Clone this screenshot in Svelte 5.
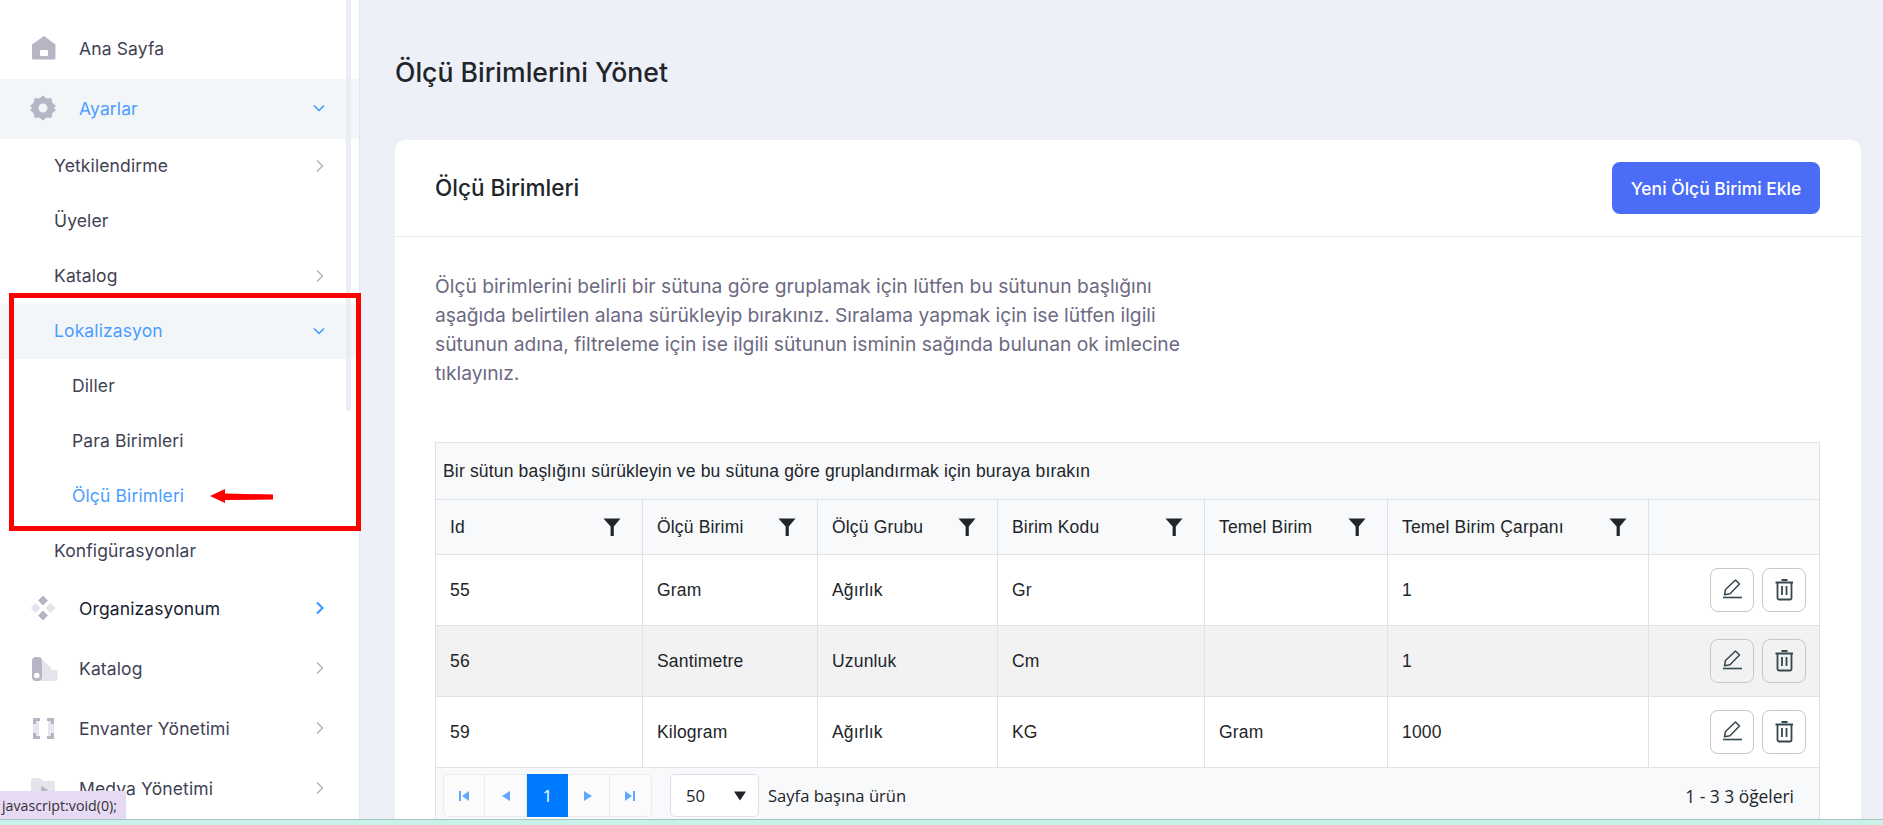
<script>
  const cols = [
    { t: 'Id', w: 207 },
    { t: 'Ölçü Birimi', w: 175 },
    { t: 'Ölçü Grubu', w: 180 },
    { t: 'Birim Kodu', w: 207 },
    { t: 'Temel Birim', w: 183 },
    { t: 'Temel Birim Çarpanı', w: 261 }
  ];
  const rows = [
    ['55', 'Gram', 'Ağırlık', 'Gr', '', '1'],
    ['56', 'Santimetre', 'Uzunluk', 'Cm', '', '1'],
    ['59', 'Kilogram', 'Ağırlık', 'KG', 'Gram', '1000']
  ];
</script>

{#snippet right(cls)}
  <svg class="chev {cls}" viewBox="0 0 10 14" width="10" height="14"><path d="M2 1.500l5.500 5.500-5.500 5.500" fill="none" stroke="currentColor" stroke-width="1.500"/></svg>
{/snippet}
{#snippet down()}
  <svg class="chev blue" viewBox="0 0 12 10" width="12" height="10"><path d="M1 2.500l5 5 5-5" fill="none" stroke="currentColor" stroke-width="1.500"/></svg>
{/snippet}

<div class="page">
  <aside class="side">
    <div class="track"></div>
    <div class="mrow">
      <svg class="ic" viewBox="0 0 26 26" width="26" height="26"><path fill="#b5b5c3" d="M14 1l11.500 8.500V23a1.500 1.500 0 0 1-1.500 1.500H3.500A1.500 1.500 0 0 1 2 23V9.500z"/><rect x="10" y="15" width="8" height="6" rx="1" fill="#fff"/></svg>
      <span class="lbl">Ana Sayfa</span>
    </div>
    <div class="mrow on">
      <svg class="ic" viewBox="0 0 26 26" width="26" height="26"><path fill="#b5b5c3" fill-rule="evenodd" d="M13 .5l3.700 2.900 4.700-.3.900 4.600 3.600 3-1.900 2.300 1.900 2.300-3.600 3-.9 4.600-4.700-.3L13 25.500l-3.700-2.900-4.700.3-.9-4.600-3.600-3 1.900-2.300L.1 10.700l3.600-3 .9-4.600 4.700.3zM13 8.500a4.500 4.500 0 1 0 0 9 4.500 4.500 0 0 0 0-9z"/></svg>
      <span class="lbl">Ayarlar</span>
      {@render down()}
    </div>
    <div class="srow"><span>Yetkilendirme</span>{@render right('grey')}</div>
    <div class="srow"><span>Üyeler</span></div>
    <div class="srow"><span>Katalog</span>{@render right('grey')}</div>
    <div class="srow on"><span>Lokalizasyon</span>{@render down()}</div>
    <div class="srow deep"><span>Diller</span></div>
    <div class="srow deep"><span>Para Birimleri</span></div>
    <div class="srow deep cur"><span>Ölçü Birimleri</span></div>
    <div class="srow"><span>Konfigürasyonlar</span></div>
    <div class="mrow">
      <svg class="ic" viewBox="0 0 26 26" width="26" height="26"><path d="M13 1l4.500 4.500L13 10 8.500 5.500z" fill="#b5b5c3" stroke="#b5b5c3" stroke-linejoin="round"/><path d="M5.500 8.500L10 13l-4.500 4.500L1 13zM20.500 8.500L25 13l-4.500 4.500L16 13z" fill="#e4e4ea" stroke="#e4e4ea" stroke-linejoin="round"/><path d="M13 16l4.500 4.500L13 25l-4.500-4.500z" fill="#b5b5c3" stroke="#b5b5c3" stroke-linejoin="round"/></svg>
      <span class="lbl dark">Organizasyonum</span>
      {@render right('bluer')}
    </div>
    <div class="mrow">
      <svg class="ic over" viewBox="0 0 26 26" width="26" height="26"><path d="M12 7l1-2 9 9-3 3h-7zM11 15h15a1.500 1.500 0 0 1 1.500 1.500V24a2 2 0 0 1-2 2H8z" fill="#e4e4ea"/><rect x="2" y="2" width="10" height="24" rx="4" fill="#b5b5c3"/><circle cx="6.800" cy="20.500" r="2.800" fill="#fff"/></svg>
      <span class="lbl">Katalog</span>
      {@render right('grey')}
    </div>
    <div class="mrow">
      <svg class="ic" viewBox="0 0 26 26" width="26" height="26"><path d="M3 6h6v15H3zM18 6h6v15h-6z" fill="#e6e6ec"/><path d="M3 3h7v3H6v3H3zM24 3h-7v3h4v3h3zM3 24h7v-3H6v-3H3zM24 24h-7v-3h4v-3h3z" fill="#b5b5c3"/></svg>
      <span class="lbl">Envanter Yönetimi</span>
      {@render right('grey')}
    </div>
    <div class="mrow">
      <svg class="ic" viewBox="0 0 26 26" width="26" height="26"><path d="M3 3h7l3 3h10a2 2 0 0 1 2 2v14a2 2 0 0 1-2 2H3a2 2 0 0 1-2-2V5a2 2 0 0 1 2-2z" fill="#e4e4ea"/><path d="M11 11l7 4-7 4z" fill="#b5b5c3"/></svg>
      <span class="lbl">Medya Yönetimi</span>
      {@render right('grey')}
    </div>
  </aside>

  <main class="main">
    <h1>Ölçü Birimlerini Yönet</h1>
    <section class="card">
      <header class="chead">
        <h2>Ölçü Birimleri</h2>
        <button class="add">Yeni Ölçü Birimi Ekle</button>
      </header>
      <div class="cbody">
        <p class="info">Ölçü birimlerini belirli bir sütuna göre gruplamak için lütfen bu sütunun başlığını aşağıda belirtilen alana sürükleyip bırakınız. Sıralama yapmak için ise lütfen ilgili sütunun adına, filtreleme için ise ilgili sütunun isminin sağında bulunan ok imlecine tıklayınız.</p>
        <div class="grid">
          <div class="group">Bir sütun başlığını sürükleyin ve bu sütuna göre gruplandırmak için buraya bırakın</div>
          <div class="thead">
            {#each cols as c}
              <div class="th" style="width:{c.w}px">
                <span>{c.t}</span>
                <svg viewBox="0 0 18 20" width="18" height="20"><path d="M.5 1.500h17L10.800 9.500v9.500H7.600V9.500z" fill="#212529"/></svg>
              </div>
            {/each}
            <div class="th last"></div>
          </div>
          {#each rows as r, i}
            <div class="tr" class:alt={i === 1}>
              {#each r as v, j}
                <div class="td" style="width:{cols[j].w}px">{v}</div>
              {/each}
              <div class="td act">
                <button class="ib" aria-label="Düzenle">
                  <svg viewBox="1 1 42 42" width="42" height="42"><path d="M14.500 26.800l1-5.300L25.500 12l4 4-9.500 9.800z" fill="none" stroke="#37474f" stroke-width="1.500" stroke-linejoin="round"/><path d="M13 29.500h19" stroke="#37474f" stroke-width="1.600"/></svg>
                </button>
                <button class="ib" aria-label="Sil">
                  <svg viewBox="1 1 42 42" width="42" height="42"><path d="M13.500 14.500h17.500M15.500 14.500v15.500a1.500 1.500 0 0 0 1.500 1.500h11a1.500 1.500 0 0 0 1.500-1.500V14.500M20 18v9M24.500 18v9M19.500 12h6" fill="none" stroke="#37474f" stroke-width="1.800"/></svg>
                </button>
              </div>
            </div>
          {/each}
          <div class="foot">
            <div class="pager">
              <span class="pg"><svg viewBox="0 0 12 12" width="12" height="12"><path d="M1 1h2v10H1zM11 1v10L4 6z" fill="#64a8fb"/></svg></span>
              <span class="pg"><svg viewBox="0 0 12 12" width="12" height="12"><path d="M10 1v10L2 6z" fill="#64a8fb"/></svg></span>
              <span class="pg act">1</span>
              <span class="pg"><svg viewBox="0 0 12 12" width="12" height="12"><path d="M2 1v10l8-5z" fill="#64a8fb"/></svg></span>
              <span class="pg"><svg viewBox="0 0 12 12" width="12" height="12"><path d="M1 1v10l7-5zM9 1h2v10H9z" fill="#64a8fb"/></svg></span>
            </div>
            <div class="sel"><span>50</span><svg viewBox="0 0 12 10" width="12" height="10"><path d="M0 .500h12L6 9.500z" fill="#212529"/></svg></div>
            <span class="per">Sayfa başına ürün</span>
            <span class="count">1 - 3 3 öğeleri</span>
          </div>
        </div>
      </div>
    </section>
  </main>

  <div class="redbox"></div>
  <svg class="arrow" viewBox="0 0 64 16" width="64" height="16"><path d="M0 8L15 1v4.500l48 1v5l-48 .5V15z" fill="#f00"/></svg>
  <div class="status">javascript:void(0);</div>
  <div class="strip"></div>
</div>

<style>
  :global(body) { margin: 0; overflow: hidden; background: #eef0f8; }
  .page { display: flex; width: 1883px; height: 825px; overflow: hidden; position: relative; font-family: Inter, "Liberation Sans", sans-serif; color: #3f4254; }
  .side { width: 360px; height: 825px; flex: none; background: #fff; border-right: 1px solid #e4e6ef; padding-top: 19px; box-sizing: border-box; position: relative; overflow: hidden; }
  .track { position: absolute; left: 346px; top: 0; width: 5px; height: 411px; background: #e9ebf5; border-radius: 0 0 3px 3px; z-index: 2; opacity: .85; }
  .mrow { height: 60px; box-sizing: border-box; padding: 0 34px 2px 30px; display: flex; align-items: center; font-size: 17.500px; letter-spacing: .12px; }
  .ic { flex: none; margin-right: 23px; }
  .over { overflow: visible; }
  .lbl { flex: 1; }
  .dark { color: #181c32; }
  .on { background: #f3f6f9; }
  .on .lbl, .on span { color: #4b9dff; }
  .srow { height: 55px; box-sizing: border-box; display: flex; align-items: center; padding: 0 34px 2px 54px; font-size: 17.500px; letter-spacing: .12px; justify-content: space-between; }
  .deep { padding-left: 72px; }
  .cur span { color: #4b9dff; }
  .chev { flex: none; }
  .grey { color: #b5b5c3; }
  .blue { color: #3699ff; }
  .bluer { color: #3699ff; }
  .bluer path { stroke-width: 2; }

  .main { flex: 1; padding: 0 22px 0 35px; min-width: 0; }
  h1 { margin: 0; height: 140px; display: flex; align-items: center; font-size: 26.600px; font-weight: 500; color: #212529; line-height: 1; box-sizing: border-box; padding-top: 5px; }
  .card { background: #fff; border-radius: 10px 10px 0 0; height: 700px; }
  .chead { height: 97px; box-sizing: border-box; border-bottom: 1px solid #ebedf3; display: flex; align-items: center; justify-content: space-between; padding: 0 41px 0 40px; }
  h2 { margin: 0 0 2px; font-size: 22.500px; font-weight: 500; color: #212529; }
  .add { width: 208px; height: 52px; border: 0; border-radius: 8px; background: #4a6cf7; color: #fff; font: 500 17.500px Inter, sans-serif; padding: 0; }
  .cbody { padding: 35px 41px 0 40px; }
  .info { margin: 0 0 54px; width: 760px; font-size: 19.250px; line-height: 29px; color: #6c6a82; height: 116px; }
  .grid { border: 1px solid #dee2e6; border-bottom: 0; font-family: "Liberation Sans", Arial, sans-serif; font-size: 17.500px; letter-spacing: .17px; color: #212529; }
  .group { height: 56px; display: flex; align-items: center; padding-left: 7px; background: #f8f9fa; border-bottom: 1px solid #dee2e6; }
  .thead { display: flex; height: 55px; background: #f8f9fa; border-bottom: 1px solid #dee2e6; box-sizing: border-box; }
  .th { display: flex; align-items: center; justify-content: space-between; box-sizing: border-box; padding: 0 21px 0 14px; border-right: 1px solid #dee2e6; flex: none; }
  .th.last { flex: 1; border-right: 0; }
  .tr { display: flex; height: 71px; border-bottom: 1px solid #dee2e6; box-sizing: border-box; }
  .tr.alt { background: #f2f2f2; }
  .td { box-sizing: border-box; padding: 0 14px; border-right: 1px solid #dee2e6; display: flex; align-items: center; flex: none; }
  .td.act { flex: 1; border-right: 0; justify-content: flex-end; gap: 8px; padding: 0 13px 0 0; }
  .ib { width: 44px; height: 44px; padding: 0; background: transparent; border: 1px solid #c4c8cc; border-radius: 8px; display: flex; align-items: center; justify-content: center; }
  .foot { height: 53px; box-sizing: border-box; padding: 2px 0 0 7px; display: flex; align-items: center; background: #f8f9fa; font-family: "Open Sans", sans-serif; font-size: 16.600px; letter-spacing: 0; }
  .pager { display: flex; height: 43px; border: 1px solid #e9ecef; border-radius: 5px; box-sizing: border-box; background: #fbfbfc; }
  .pg { width: 41.400px; display: flex; align-items: center; justify-content: center; border-right: 1px solid #e9ecef; box-sizing: border-box; }
  .pg:last-child { border-right: 0; }
  .pg.act { background: #007bff; color: #fff; border: 0; margin: -1px 0; }
  .sel { margin-left: 18px; width: 89px; height: 43px; box-sizing: border-box; border: 1px solid #dee2e6; background: #fff; border-radius: 5px; display: flex; align-items: center; justify-content: space-between; padding: 0 12px 0 15px; }
  .per { margin-left: 9px; }
  .count { margin-left: auto; margin-right: 25px; font-size: 17.400px; }
  .redbox { position: absolute; left: 9px; top: 293px; width: 352px; height: 238px; box-sizing: border-box; border: 5px solid #f00; z-index: 3; }
  .arrow { position: absolute; left: 210px; top: 488px; z-index: 3; }
  .status { position: absolute; z-index: 4; left: 0; bottom: 6px; height: 28px; width: 126px; background: #e7daf5; font: 14.200px "Open Sans", sans-serif; color: #333; display: flex; align-items: center; padding-left: 2px; box-sizing: border-box; border-top-right-radius: 2px; }
  .strip { position: absolute; z-index: 4; left: 0; right: 0; bottom: 0; height: 6px; background: #c8f1ea; border-top: 1px solid #a9c4be; box-sizing: border-box; }
</style>
